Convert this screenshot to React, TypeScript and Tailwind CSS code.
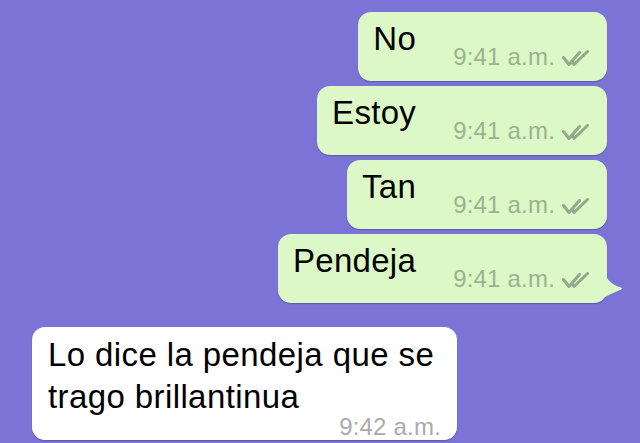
const font = "font-['Helvetica_Neue','Liberation_Sans',Arial,sans-serif]";

const Ticks = () => (
  <svg width="28" height="17" viewBox="0 0 28 17" className="ml-[7px] mb-[3px]">
    <path d="M1.5 7.5 L7 14.5 L17.5 2.5" fill="none" stroke="#93a989" strokeWidth="3" strokeLinecap="round" strokeLinejoin="round" />
    <path d="M10 11.5 L12 14.5 L25.5 1.5" fill="none" stroke="#93a989" strokeWidth="3" strokeLinecap="round" strokeLinejoin="round" />
  </svg>
);

const Outgoing = ({ text, tail }: { text: string; tail?: boolean }) => (
  <div className="relative self-end">
    <div className="flex items-start rounded-[13px] bg-[#dcf8c6] pl-[15px] pr-[17px] pt-[9px] pb-[11px] shadow-[0_1px_1px_rgba(40,30,110,0.35)]">
      <span className="text-[33px] leading-[36px] tracking-[0.3px] text-black">{text}</span>
      <span className="ml-[37px] mt-[23px] flex items-end text-[24px] leading-[26px] tracking-[0.2px] text-[#9db291]">
        9:41 a.m.
        <Ticks />
      </span>
    </div>
    {tail && (
      <svg width="22" height="36" viewBox="0 0 22 36" className="absolute right-[-18px] bottom-[0px]">
        <path d="M0 0 C2 10 6 17 18 20.5 C19.5 21 19 22 18 22.5 C12 25 6 28 0 31 Z" fill="#dcf8c6" />
      </svg>
    )}
  </div>
);

export default function App() {
  return (
    <div className={`${font} w-[640px] h-[443px] overflow-hidden bg-[#7b73d6] flex flex-col pr-[33px] pt-[12px]`}>
      <div className="flex flex-col gap-[5px]">
        <Outgoing text="No" />
        <Outgoing text="Estoy" />
        <Outgoing text="Tan" />
        <Outgoing text="Pendeja" tail />
      </div>
      <div className="mt-[24px] ml-[32px] w-[425px] rounded-[13px] bg-white pl-[16px] pr-[16px] pt-[7px] flex flex-col shadow-[0_1px_1px_rgba(40,30,110,0.35)]">
        <span className="text-[33px] leading-[42px] tracking-[0.4px] text-black">Lo dice la pendeja que se trago brillantinua</span>
        <span className="self-end mt-[-4px] text-[24px] leading-[26px] tracking-[0.2px] text-[#ababab]">9:42 a.m.</span>
      </div>
    </div>
  );
}
